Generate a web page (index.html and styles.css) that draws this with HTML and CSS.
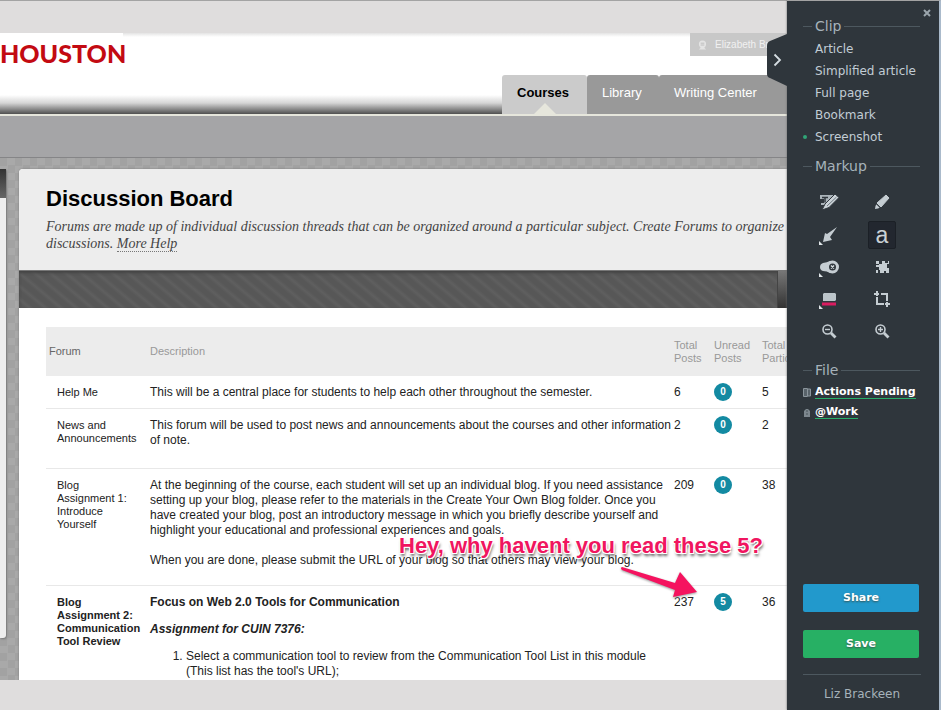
FILE: index.html
```html
<!DOCTYPE html>
<html lang="en">
<head>
<meta charset="utf-8">
<title>Discussion Board</title>
<link rel="stylesheet" href="styles.css">
</head>
<body>
<div class="app">
  <main class="capture">
    <div class="matte matte-top"></div>
    <header class="site-header">
      <div class="logo">HOUSTON</div>
      <div class="header-right">
        <div class="user">
          <svg class="user-icon" viewBox="0 0 10 12"><path d="M1 5a4 4 0 0 1 8 0c0 2-1 3-2 4l2 2H1l2-2C2 8 1 7 1 5z" fill="#e4e4e4"/><path d="M3 4h4M3 6h4" stroke="#bbb"/></svg>
          <span>Elizabeth Brackeen</span>
        </div>
        <nav class="tabs">
          <a class="tab tab-active" href="#">Courses</a>
          <a class="tab tab-library" href="#">Library</a>
          <a class="tab tab-last" href="#">Writing Center</a>
        </nav>
      </div>
    </header>
    <div class="crumbs"></div>
    <div class="page">
      <aside class="stub"><div class="stub-head"></div></aside>
      <section class="board">
        <div class="intro">
          <h1>Discussion Board</h1>
          <p>Forums are made up of individual discussion threads that can be organized around a particular subject. Create Forums to organize<br>discussions. <a href="#">More Help</a></p>
        </div>
        <div class="toolbar"><div class="toolbar-end"></div></div>
        <table class="forums">
          <colgroup><col class="col-forum"><col><col class="col-posts"><col class="col-unread"><col class="col-part"></colgroup>
          <thead>
            <tr><th class="name">Forum</th><th>Description</th><th>Total<br>Posts</th><th>Unread<br>Posts</th><th>Total<br>Participants</th></tr>
          </thead>
          <tbody>
            <tr>
              <td class="name">Help Me</td>
              <td>This will be a central place for students to help each other throughout the semester.</td>
              <td>6</td><td><span class="badge">0</span></td><td>5</td>
            </tr>
            <tr class="row-roomy">
              <td class="name">News and Announcements</td>
              <td>This forum will be used to post news and announcements about the courses and other information<br>of note.</td>
              <td>2</td><td><span class="badge">0</span></td><td>2</td>
            </tr>
            <tr class="row-long">
              <td class="name">Blog<br>Assignment 1:<br>Introduce<br>Yourself</td>
              <td>At the beginning of the course, each student will set up an individual blog. If you need assistance<br>setting up your blog, please refer to the materials in the Create Your Own Blog folder. Once you<br>have created your blog, post an introductory message in which you briefly describe yourself and<br>highlight your educational and professional experiences and goals.<br><br>When you are done, please submit the URL of your blog so that others may view your blog.</td>
              <td>209</td><td><span class="badge">0</span></td><td>38</td>
            </tr>
            <tr>
              <td class="name"><strong>Blog<br>Assignment 2:<br>Communication<br>Tool Review</strong></td>
              <td>
                <strong>Focus on Web 2.0 Tools for Communication</strong>
                <p class="assignment">Assignment for CUIN 7376:</p>
                <ol><li>Select a communication tool to review from the Communication Tool List in this module<br>(This list has the tool's URL);</li></ol>
              </td>
              <td>237</td><td><span class="badge">5</span></td><td>36</td>
            </tr>
          </tbody>
        </table>
      </section>
    </div>
    <div class="matte matte-bottom"></div>
    <div class="note">Hey, why havent you read these 5?</div>
    <svg class="arrow" viewBox="0 0 80 40"><path d="M2 4 Q0 2 2 1 L55 17 L60 6 L77 26 L53 31 L55 24 Z" fill="#f5135f"/></svg>
  </main>

  <aside class="clipper">
    <button class="handle" aria-label="Collapse">
      <svg viewBox="0 0 20 52"><path d="M20 0 L3 7 Q0 8 0 12 V40 Q0 43 3 44 L20 52Z" fill="#2f363c"/><path d="M7.500 20.500 L13 26 L7.500 31.500" fill="none" stroke="#d5dde2" stroke-width="1.800"/></svg>
    </button>
    <button class="close" aria-label="Close"><svg viewBox="0 0 8 8"><path d="M1 1l6 6M7 1l-6 6" stroke="#9ba5ac" stroke-width="2"/></svg></button>

    <h2 class="group">Clip</h2>
    <ul class="modes">
      <li><a href="#">Article</a></li>
      <li><a href="#">Simplified article</a></li>
      <li><a href="#">Full page</a></li>
      <li><a href="#">Bookmark</a></li>
      <li class="current"><a href="#">Screenshot</a></li>
    </ul>

    <h2 class="group">Markup</h2>
    <div class="tools">
      <button aria-label="Highlight text"><svg viewBox="0 0 28 28"><path d="M5 6h17l-2 4-8 6H6V14h3V10H5z" fill="#aab3b9"/><path d="M7 8.500h6M10 8.500v5" stroke="#30373d" stroke-width="1.500"/><path d="M20 5l4 3.500-10 10-7 2.500 3-6z" fill="#cbd3d8" stroke="#30373d"/><path d="M12 17l9.500-9" stroke="#717b82" stroke-width="1"/></svg></button>
      <button aria-label="Marker"><svg viewBox="0 0 28 28"><path d="M18 6l3 3-8 9-4-4z" fill="#c5cdd2" stroke="#c5cdd2" stroke-width="1"/><path d="M8.500 15l3.500 3.500-2 1-3 .5.500-3z" fill="#c5cdd2"/><path d="M8 14.500l5 5" stroke="#30373d"/></svg></button>
      <button aria-label="Arrow"><svg viewBox="0 0 28 28"><path d="M22 6L12 13l-2-1-2 9 9-2-2-3z" fill="#c5cdd2"/><path d="M4 20l4 4H4z" fill="#e0e5e8"/></svg></button>
      <button class="selected" aria-label="Text">a</button>
      <button aria-label="Stamp"><svg viewBox="0 0 28 28"><path d="M5 14q0-3 3-4 4-.5 7-2l4 0 0 12-4 0q-3-2-7-2-3-1-3-4z" fill="#c5cdd2"/><circle cx="17.500" cy="14" r="5" fill="#30373d" stroke="#c5cdd2" stroke-width="3"/><path d="M16 12.500l3 3m0-3l-3 3" stroke="#d9e0e4" stroke-width="1.400"/><path d="M4 20l4 4H4z" fill="#e0e5e8"/></svg></button>
      <button aria-label="Pixelate"><svg viewBox="0 0 28 28"><path d="M8 8h3v3h3V8h3v2h3V8h1v3h-2v4h2v5h-3v-2h-2v2h-4v-3h-2v3H8v-3h3v-3H8v-2h3v-1H8z" fill="#c5cdd2"/></svg></button>
      <button aria-label="Color"><svg viewBox="0 0 28 28"><path d="M9 8h11l1 1v6l-1 1H8V9z" fill="#bcc5ca"/><path d="M7 19h14" stroke="#da1c60" stroke-width="3"/><path d="M4 20l4 4H4z" fill="#e0e5e8"/></svg></button>
      <button aria-label="Crop"><svg viewBox="0 0 28 28"><path d="M9 6v5M6 9h5M9 12v7h7M13 9h6v7M19 17v5M17 19h5" fill="none" stroke="#c5cdd2" stroke-width="2"/></svg></button>
      <button aria-label="Zoom out"><svg viewBox="0 0 28 28"><circle cx="12.500" cy="12.500" r="4.500" fill="none" stroke="#c5cdd2" stroke-width="1.600"/><path d="M10 12.500h5" stroke="#c5cdd2" stroke-width="1.400"/><path d="M16 16l4.500 4.500" stroke="#c5cdd2" stroke-width="2.800"/></svg></button>
      <button aria-label="Zoom in"><svg viewBox="0 0 28 28"><circle cx="12.500" cy="12.500" r="4.500" fill="none" stroke="#c5cdd2" stroke-width="1.600"/><path d="M10 12.500h5M12.500 10v5" stroke="#c5cdd2" stroke-width="1.400"/><path d="M16 16l4.500 4.500" stroke="#c5cdd2" stroke-width="2.800"/></svg></button>
    </div>

    <h2 class="group">File</h2>
    <ul class="files">
      <li><svg viewBox="0 0 8 9"><path d="M.5.500h4v8h-4zM5 1h2.500v7H5" fill="#59636a" stroke="#8b959c"/></svg><a href="#">Actions Pending</a></li>
      <li><svg viewBox="0 0 8 9"><path d="M1 4V3l2-2h2l2 2v6H1z" fill="#7d878e"/><path d="M3 3h2M3 6h2" stroke="#4b545a"/></svg><a href="#">@Work</a></li>
    </ul>

    <div class="actions">
      <button class="action share">Share</button>
      <button class="action save">Save</button>
      <div class="account">Liz Brackeen</div>
    </div>
  </aside>
</div>
</body>
</html>
```

FILE: styles.css
```css
* { box-sizing: border-box; }
body { margin: 0; font-family: "Liberation Sans", Arial, sans-serif; font-size: 12px; color: #222; }
button { border: 0; padding: 0; background: none; font: inherit; color: inherit; }
ul { list-style: none; margin: 0; padding: 0; }
svg { display: block; }

.app { display: flex; height: 100vh; overflow: hidden; }
.capture { position: relative; flex: 1; min-width: 0; display: flex; flex-direction: column; overflow: hidden; }
.matte { flex: none; background: #dfdddd; }
.matte-top { height: 33px; border-top: 1px solid #a3a3a3; }
.matte-bottom { height: 30px; }

.site-header {
  flex: none; display: flex; justify-content: space-between; height: 83px;
  border-bottom: 2px solid #e6e6dc;
  background: linear-gradient(#e4e4e4, #fff 4px, #fff 62px, #d5d5d5 70px, #8c8c8c 76px, #505050 81px);
}
.logo {
  width: 123px; height: 30px; padding-top: 5px; background: #fff; color: #c30a12;
  font: 900 25px/30px Lato, sans-serif; white-space: nowrap;
}
.header-right { width: 285px; display: flex; flex-direction: column; justify-content: space-between; align-items: flex-end; }
.user {
  width: 97px; height: 23px; padding: 0 8px; display: flex; align-items: center; gap: 8px;
  background: #c8c8c8; color: #f1f1f1; font-size: 10px; white-space: nowrap; overflow: hidden;
}
.user-icon { flex: none; width: 9px; height: 12px; }
.tabs { display: flex; width: 100%; height: 39px; }
.tab {
  flex: none; padding: 0 15px; border-radius: 3px 3px 0 0; background: #999;
  color: #fff; font-size: 13px; line-height: 35px; text-decoration: none;
}
.tab-active { position: relative; width: 85px; background: #cbcbcb; color: #000; font-weight: bold; }
.tab-active::after {
  content: ""; position: absolute; bottom: 0; left: 50%; margin-left: -11px;
  border: 11px solid transparent; border-top: 0; border-bottom-color: #e6e6dc;
}
.tab-library { width: 72px; }
.tab-last { flex: 1; }
.crumbs { flex: none; height: 42px; background: #a5a5a7; border-bottom: 1px solid #858587; }

.page {
  flex: 1; min-height: 0; display: flex; align-items: flex-start; gap: 13px; padding-top: 11px; overflow: hidden;
  background: repeating-conic-gradient(#a9a9a9 0 25%, #a2a2a2 0 50%) 0 0 / 15px 15px;
}
.stub { flex: none; width: 6px; height: 469px; background: #eee; border-radius: 0 0 3px 0; box-shadow: 1px 1px 2px #777; }
.stub-head { height: 29px; background: linear-gradient(#333, #666); }
.board { flex: 1; min-width: 0; min-height: 100%; background: #fff; border-radius: 4px 0 0 0; box-shadow: 0 0 2px #777; }
.intro { height: 102px; padding: 16px 0 0 27px; background: #ededed; border-radius: 4px 0 0 0; border-bottom: 1px solid #777; }
h1 { margin: 0 0 5px; color: #000; font-size: 22px; line-height: 28px; }
.intro p { margin: 0; font: italic 14px/17px "Liberation Serif", serif; color: #444; white-space: nowrap; }
.intro a { color: #444; text-decoration: none; border-bottom: 1px dotted #777; }
.toolbar {
  display: flex; justify-content: flex-end; height: 37px;
  background: repeating-linear-gradient(40deg, #575757 0, #575757 4px, #5f5f5f 7px, #575757 10px); box-shadow: inset 0 2px 3px #444;
}
.toolbar-end { width: 10px; background: linear-gradient(#777, #333); border-left: 1px solid #444; }

.forums { width: calc(100% - 27px); margin: 19px 0 0 27px; table-layout: fixed; border-collapse: collapse; }
.col-forum { width: 101px; }
.col-posts { width: 40px; }
.col-unread { width: 48px; }
.col-part { width: 28px; }
th { height: 49px; padding: 0 3px; background: #ececec; color: #999; font-size: 11px; font-weight: normal; line-height: 13px; text-align: left; white-space: nowrap; }
th.name { color: #666; }
td { padding: 9px 3px 8px; border-bottom: 1px solid #e8e8e8; line-height: 15px; vertical-align: top; white-space: nowrap; }
td.name { padding-left: 11px; padding-top: 10px; font-size: 11px; line-height: 13px; white-space: normal; }
.row-roomy td { padding-bottom: 20px; }
.row-long td { padding-bottom: 17px; }
.badge {
  display: block; width: 18px; height: 18px; margin: -2px 0 -1px; border-radius: 50%;
  background: #138aa2; color: #fff; font-size: 10px; font-weight: bold; line-height: 18px; text-align: center;
}
.assignment { margin: 12px 0; font-style: italic; font-weight: bold; }
ol { margin: 0; padding-left: 36px; }

.note {
  position: absolute; left: 399px; top: 532px; color: #f0155f; font-size: 22px; font-weight: bold; line-height: 28px; white-space: nowrap;
  text-shadow: 1px 1px 0 #fff, -1px -1px 0 #fff, 1px -1px 0 #fff, -1px 1px 0 #fff, 1px 3px 3px #555;
}
.arrow { position: absolute; left: 620px; top: 566px; width: 80px; height: 40px; filter: drop-shadow(0 1px 1px #999); }

.clipper {
  position: relative; flex: none; display: flex; flex-direction: column; width: 154px; padding: 17px 20px 0 16px;
  background: #2f363c; border-top: 1px solid #a3a3a3; border-right: 2px solid #aabacb;
  box-shadow: 0 0 2px #666; color: #c2cdd5; font: 12px/22px "DejaVu Sans", sans-serif;
}
.clipper a { color: inherit; text-decoration: none; }
.handle { position: absolute; left: -20px; top: 33px; width: 20px; height: 52px; }
.close { position: absolute; right: 8px; top: 8px; width: 8px; height: 8px; }
.group { display: flex; align-items: center; gap: 3px; margin: 0 -1px 4px 0; color: #a6b2ba; font-size: 14px; font-weight: normal; line-height: 16px; }
.group::before, .group::after { content: ""; height: 1px; background: #4d585f; }
.group::before { width: 9px; }
.group::after { flex: 1; }
.modes { margin-bottom: 10px; }
.modes li { padding-left: 12px; white-space: nowrap; }
.modes .current { position: relative; }
.current::before { content: ""; position: absolute; left: 0; top: 9px; width: 4px; height: 4px; border-radius: 50%; background: #30a577; }
.tools { display: grid; grid-template-columns: 28px 28px; gap: 4px 25px; margin: 11px 0 17px 12px; }
.tools button { height: 28px; border-radius: 2px; }
.tools svg { width: 28px; height: 28px; }
.tools .selected { background: #22272f; border: 1px solid #1b2026; color: #c9d1d6; font: 23px/24px "Liberation Sans", sans-serif; }
.files { color: #fff; font-size: 11px; font-weight: bold; }
.files li { display: flex; align-items: center; gap: 4px; height: 20px; white-space: nowrap; }
.files svg { flex: none; width: 8px; height: 9px; }
.files a { line-height: 13px; border-bottom: 1px solid #27ae68; }
.actions { margin-top: auto; }
.action { display: block; width: 116px; height: 28px; margin-bottom: 18px; border-radius: 2px; color: #fff; font-size: 11px; font-weight: bold; text-shadow: 0 1px 2px #355; }
.share { background: #2299cc; }
.save { background: #27b064; margin-bottom: 16px; }
.account { border-top: 1px solid #4d585f; padding: 8px 0 5px; margin-right: -2px; text-align: center; color: #a6b2ba; }
```
